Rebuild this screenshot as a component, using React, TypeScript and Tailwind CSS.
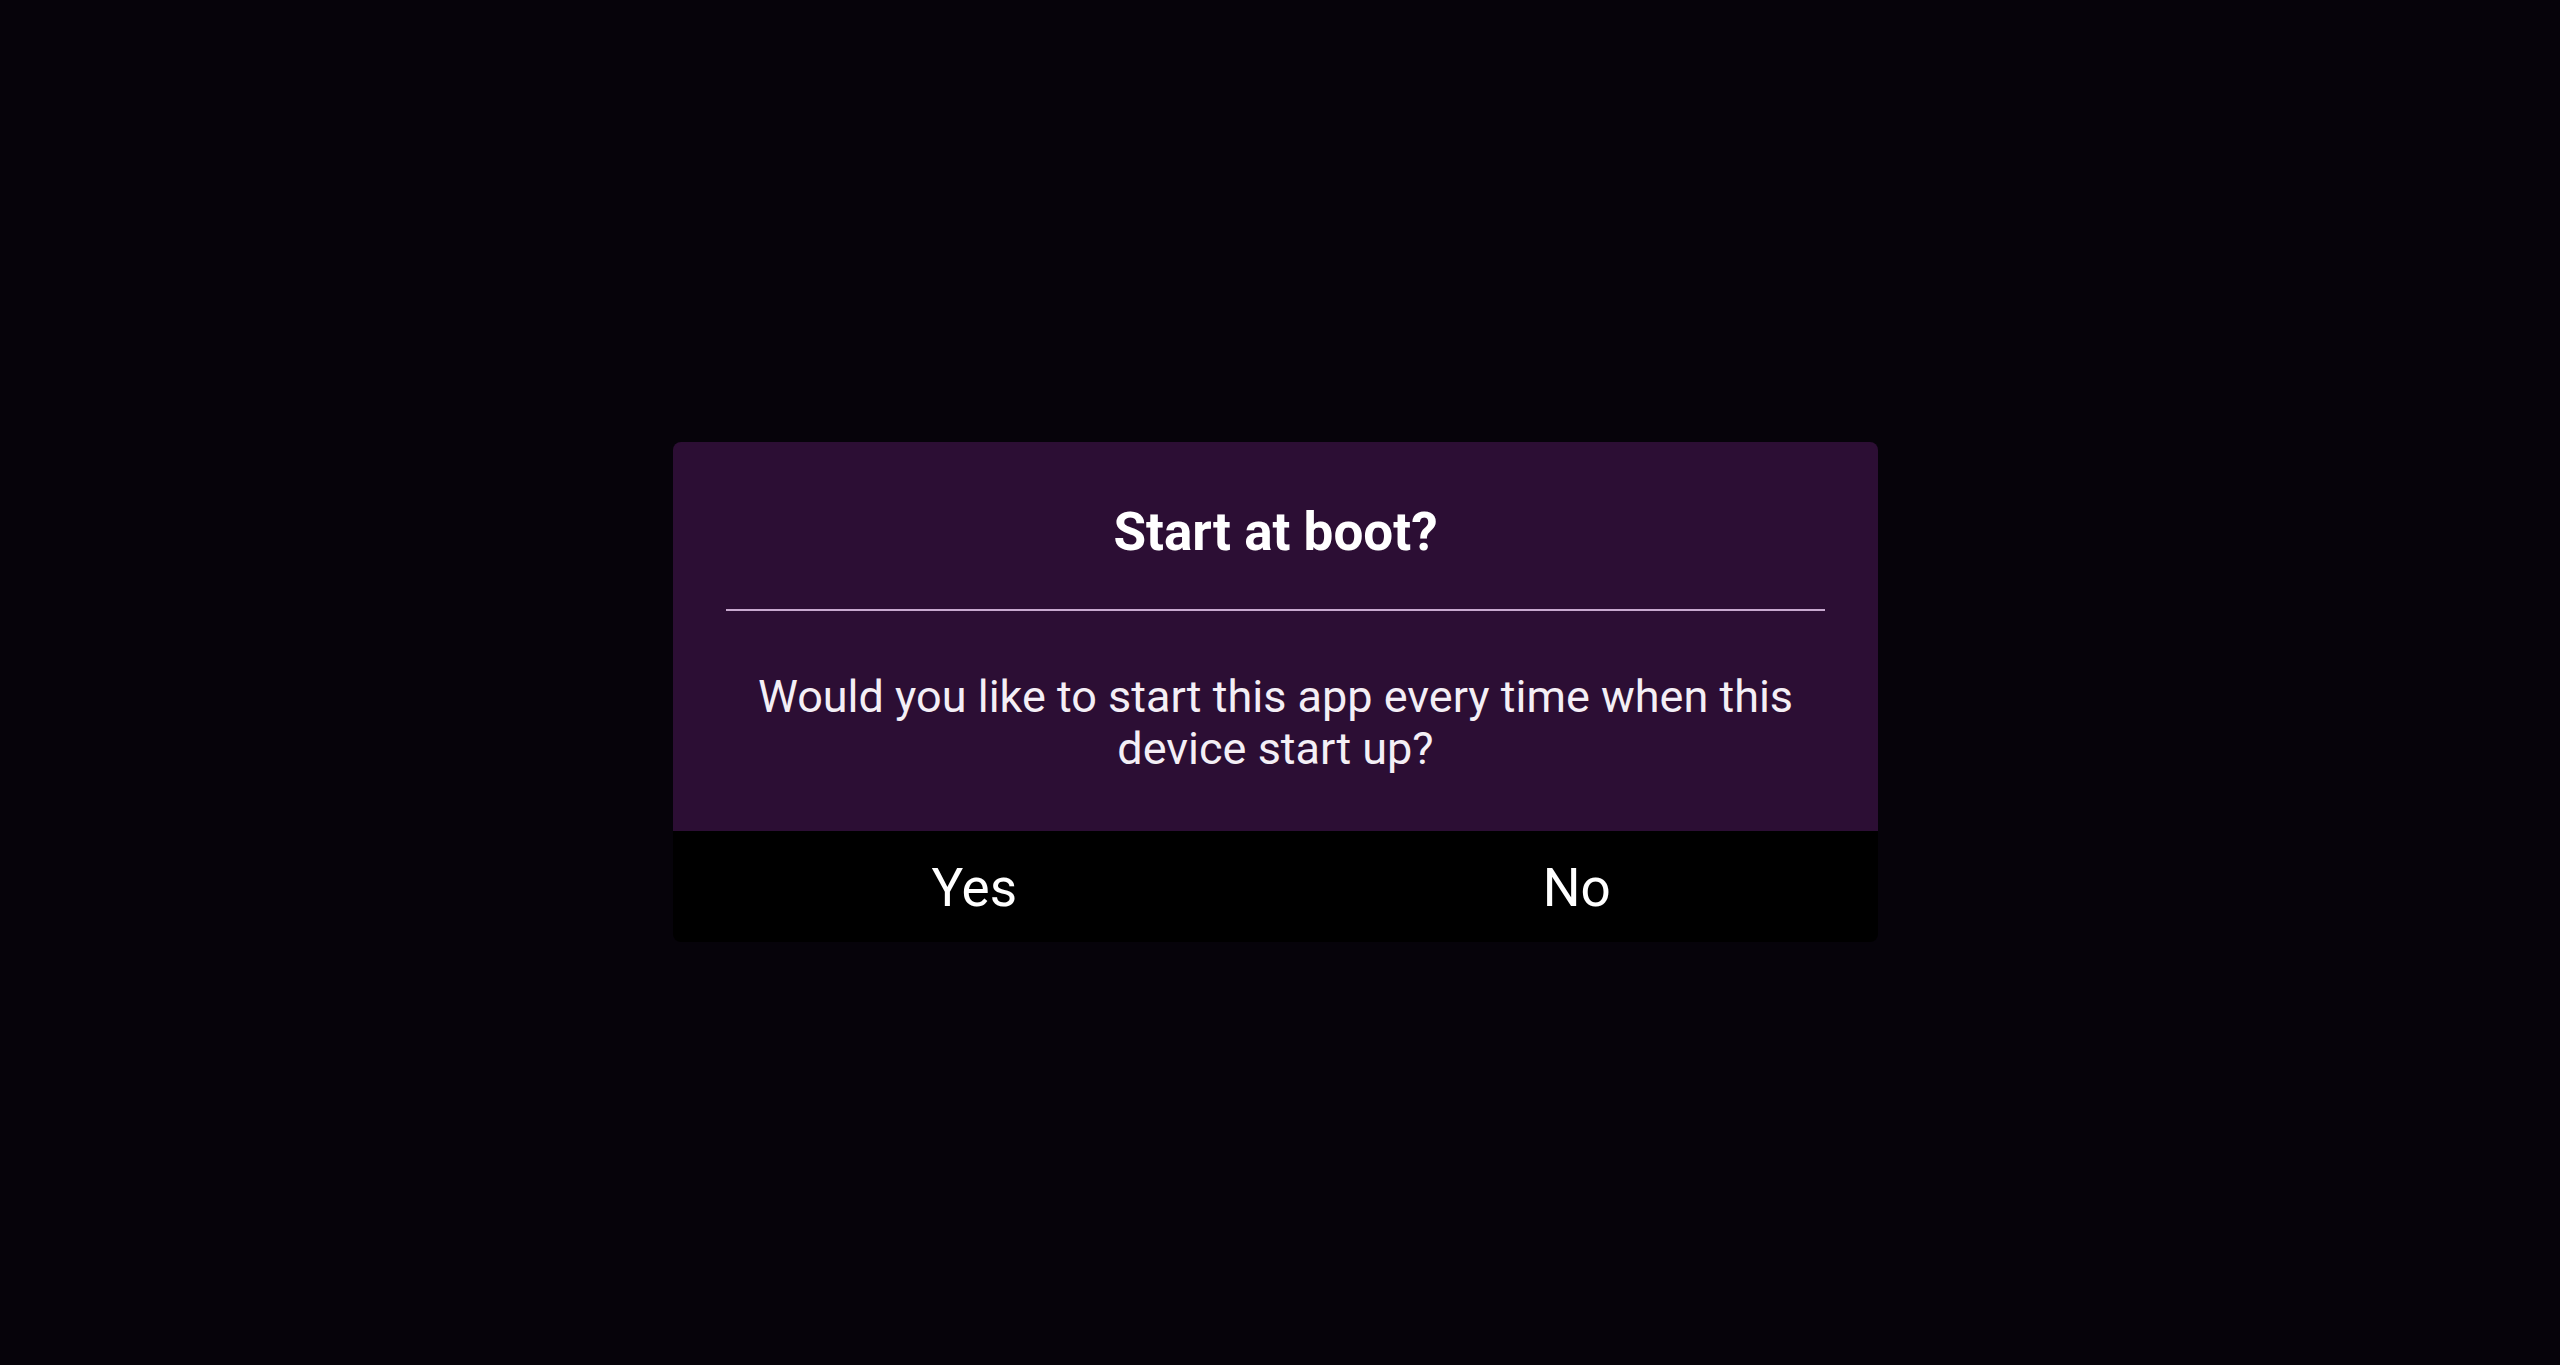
import React from 'react'

const choices = ['Yes', 'No']

export default function App() {
  return (
    <div className="min-h-screen w-full bg-[#06030a] pt-[442px] pl-[673px] font-['Roboto','Noto_Sans',sans-serif]">
      <div className="w-[1205px] rounded-[8px] overflow-hidden">
        {/* Header + message */}
        <div className="bg-[#2c0e34] pt-[64px] pb-[56px]">
          <h1 className="text-center text-[53px] leading-none font-bold text-white">Start at boot?</h1>
          <div className="mx-[53px] mt-[50px] h-[2px] bg-[#c8a9cf]" />
          <p className="mt-[60px] px-[40px] text-center text-[45px] leading-[52px] text-[#f4eff6]">
            Would you like to start this app every time when this device start up?
          </p>
        </div>

        {/* Actions */}
        <div className="grid grid-cols-2 h-[111px] bg-black">
          {choices.map(c => (
            <button key={c} className="flex items-center justify-center pt-[5px] text-[53px] text-white">
              {c}
            </button>
          ))}
        </div>
      </div>
    </div>
  )
}
